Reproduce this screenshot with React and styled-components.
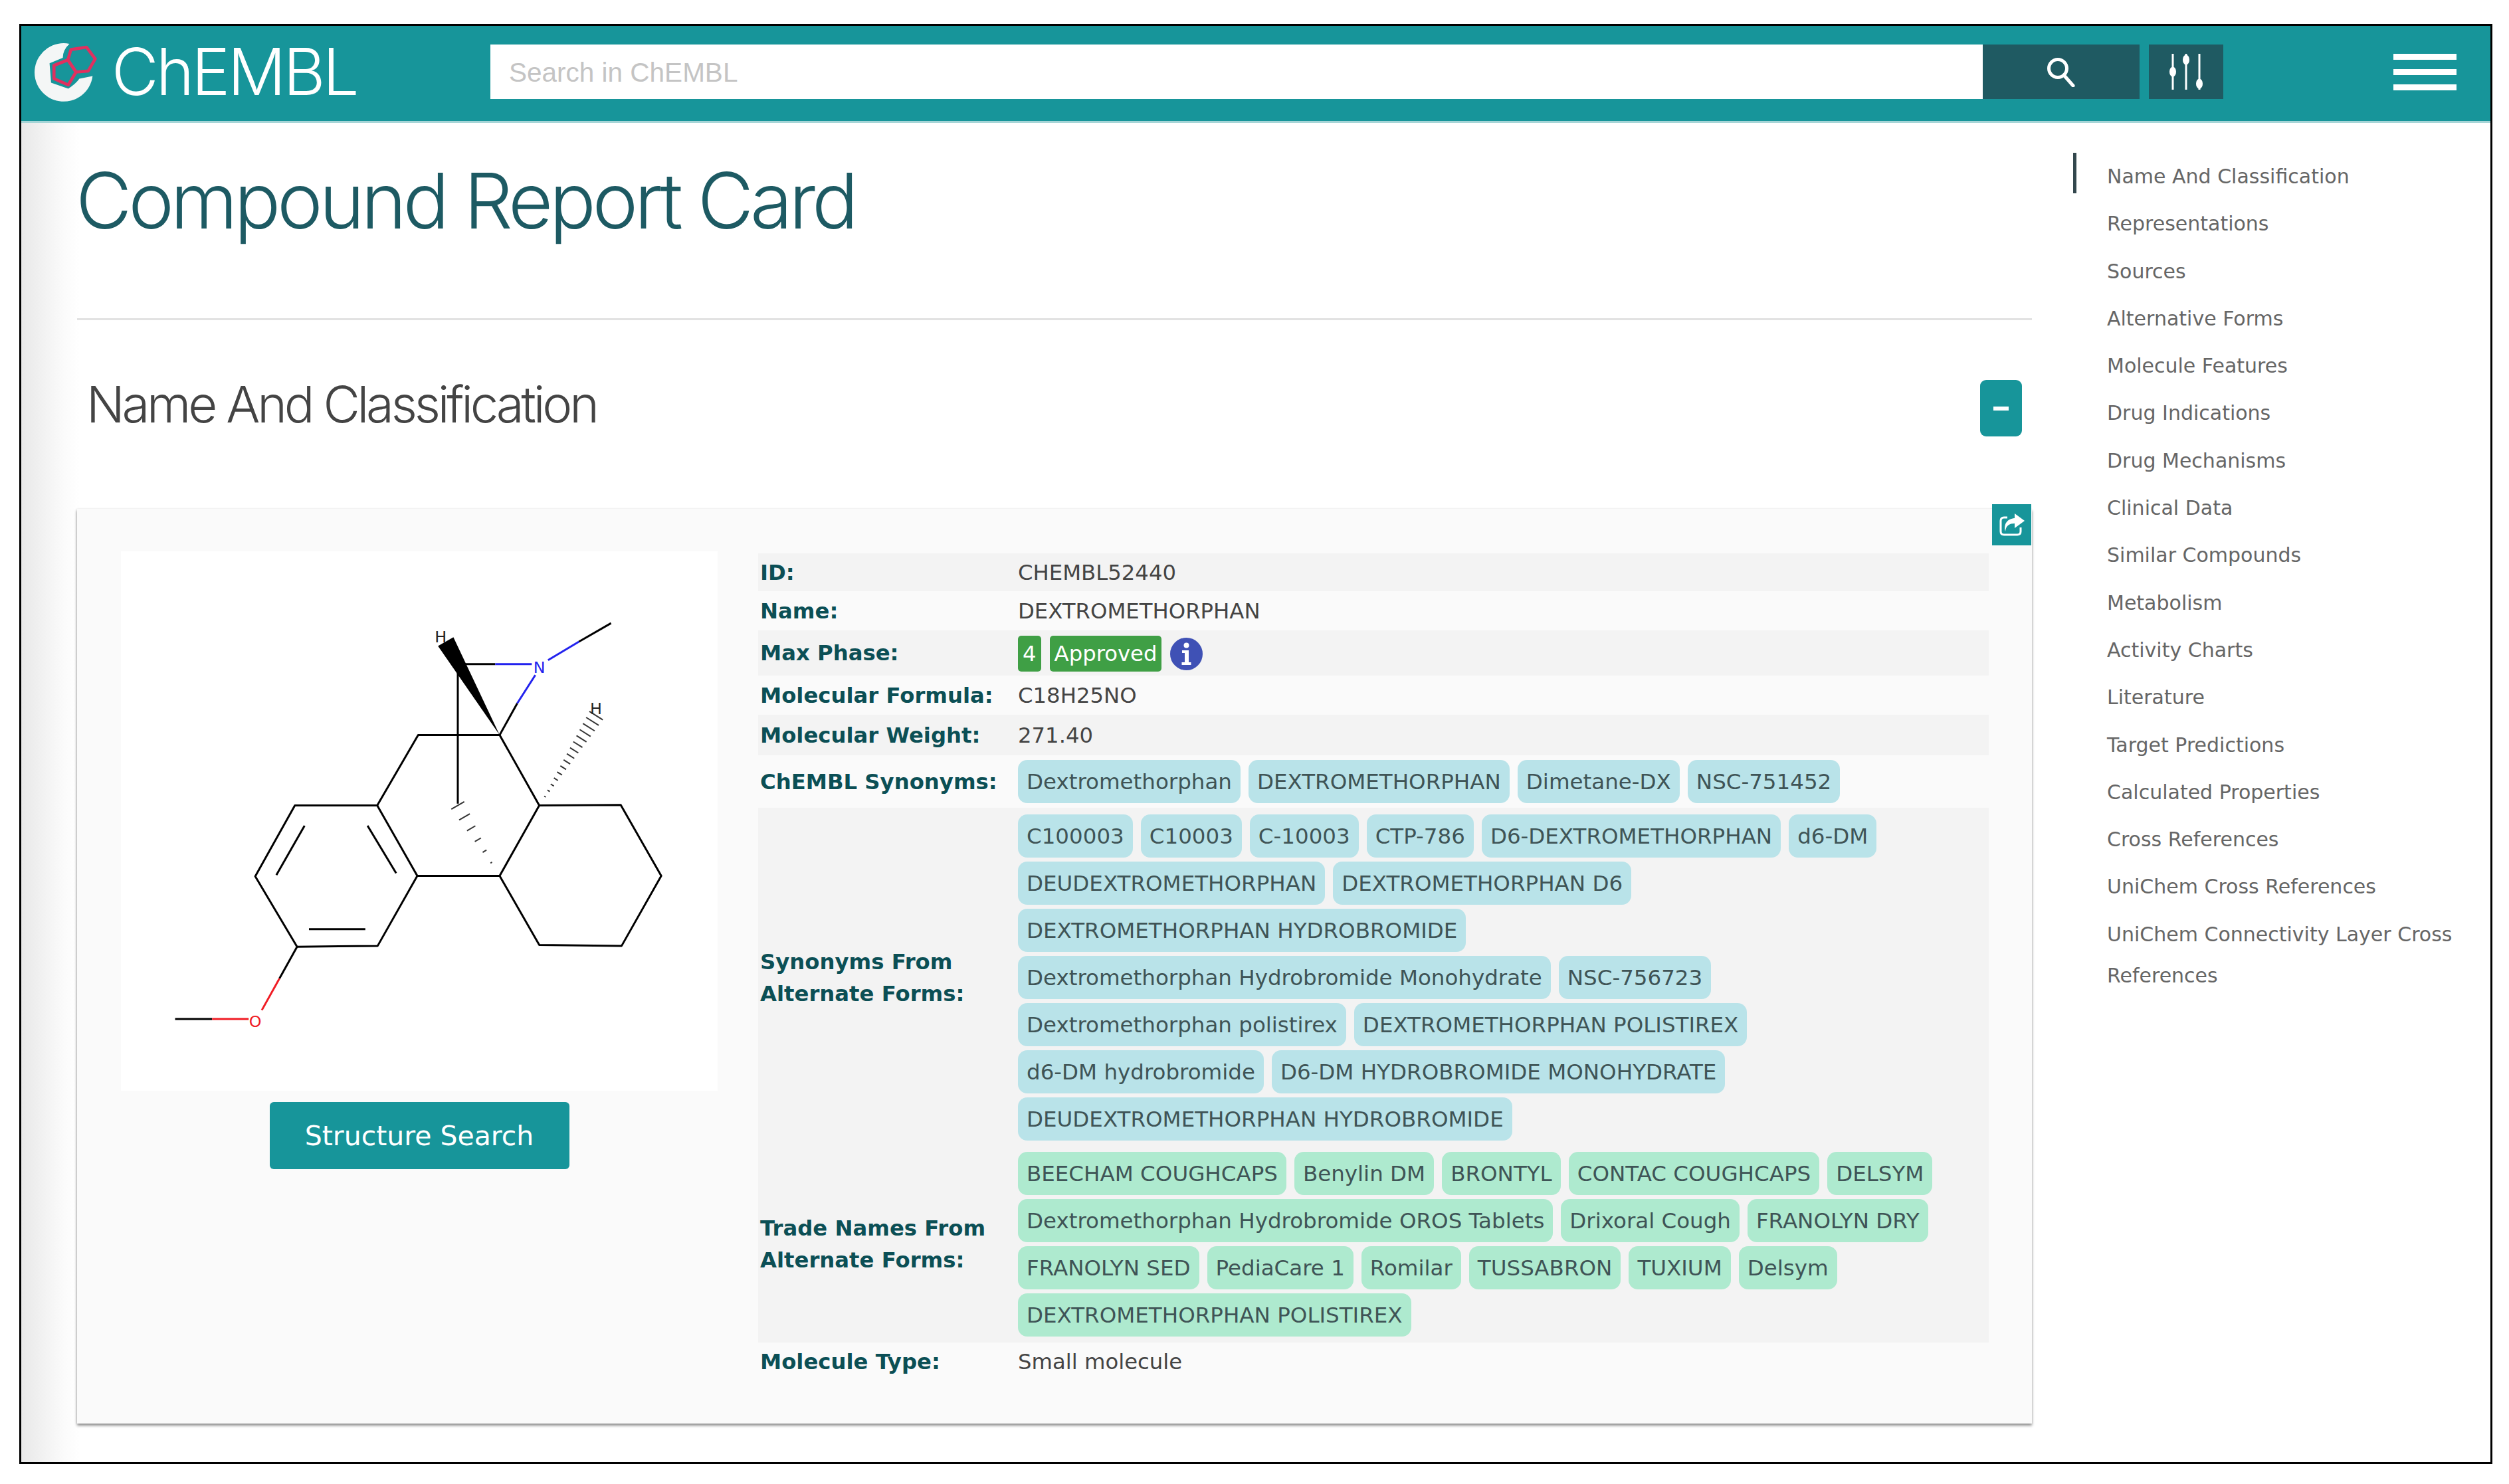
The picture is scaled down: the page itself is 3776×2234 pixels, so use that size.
import React from 'react';
import styled, { createGlobalStyle } from 'styled-components';

const Global = createGlobalStyle`
    html, body {
        margin: 0;
        padding: 0;
        background: #fff;
    }
    * {
        box-sizing: border-box;
    }
`

const NAV = [
    'Name And Classification', 'Representations', 'Sources', 'Alternative Forms', 'Molecule Features',
    'Drug Indications', 'Drug Mechanisms', 'Clinical Data', 'Similar Compounds', 'Metabolism',
    'Activity Charts', 'Literature', 'Target Predictions', 'Calculated Properties', 'Cross References',
    'UniChem Cross References', 'UniChem Connectivity Layer Cross References',
];

const CHEMBL_SYNONYMS = [['Dextromethorphan', 'DEXTROMETHORPHAN', 'Dimetane-DX', 'NSC-751452']];

const ALT_SYNONYMS = [
    ['C100003', 'C10003', 'C-10003', 'CTP-786', 'D6-DEXTROMETHORPHAN', 'd6-DM'],
    ['DEUDEXTROMETHORPHAN', 'DEXTROMETHORPHAN D6'],
    ['DEXTROMETHORPHAN HYDROBROMIDE'],
    ['Dextromethorphan Hydrobromide Monohydrate', 'NSC-756723'],
    ['Dextromethorphan polistirex', 'DEXTROMETHORPHAN POLISTIREX'],
    ['d6-DM hydrobromide', 'D6-DM HYDROBROMIDE MONOHYDRATE'],
    ['DEUDEXTROMETHORPHAN HYDROBROMIDE'],
];

const TRADE_NAMES = [
    ['BEECHAM COUGHCAPS', 'Benylin DM', 'BRONTYL', 'CONTAC COUGHCAPS', 'DELSYM'],
    ['Dextromethorphan Hydrobromide OROS Tablets', 'Drixoral Cough', 'FRANOLYN DRY'],
    ['FRANOLYN SED', 'PediaCare 1', 'Romilar', 'TUSSABRON', 'TUXIUM', 'Delsym'],
    ['DEXTROMETHORPHAN POLISTIREX'],
];

// hashed stereo bond, thin at (x1,y1) and wide at (x2,y2)
function hashLines(x1, y1, x2, y2, count, maxHalf) {
    const len = Math.hypot(x2 - x1, y2 - y1);
    const nx = -(y2 - y1) / len;
    const ny = (x2 - x1) / len;
    return Array.from({ length: count }, (_, i) => {
        const t = i / (count - 1);
        const h = 2 + t * maxHalf;
        const cx = x1 + (x2 - x1) * t;
        const cy = y1 + (y2 - y1) * t;
        return <line key={i} x1={cx - nx * h} y1={cy - ny * h} x2={cx + nx * h} y2={cy + ny * h} />;
    });
}

const Molecule = () => (
    <MoleculeSvg viewBox="125 105 1355 1225">
        <g stroke="#000" strokeWidth="4.5" fill="none" strokeLinejoin="round">
            <polyline points="707,682 800,522 985,522 1075,682" />
            <polygon points="707,682 520,682 430,843 525,1003 708,1001 798,842" />
            <line x1="542" y1="728" x2="478" y2="840" />
            <line x1="685" y1="728" x2="750" y2="836" />
            <line x1="552" y1="963" x2="680" y2="963" />
            <polyline points="798,842 985,842 1075,682 1260,681 1352,842 1262,1001 1075,999 985,842" />
            <line x1="890" y1="362" x2="890" y2="678" />
            <line x1="890" y1="361" x2="975" y2="361" />
            <line x1="985" y1="522" x2="1025" y2="450" />
            <line x1="1165" y1="310" x2="1238" y2="268" />
            <line x1="525" y1="1003" x2="485" y2="1075" />
            <line x1="332" y1="1167" x2="248" y2="1167" />
        </g>
        <g stroke="#2222ee" strokeWidth="4.5" fill="none">
            <line x1="975" y1="361" x2="1058" y2="361" />
            <line x1="1025" y1="450" x2="1066" y2="386" />
            <line x1="1095" y1="352" x2="1165" y2="310" />
        </g>
        <g stroke="#f01c24" strokeWidth="4.5" fill="none">
            <line x1="485" y1="1075" x2="445" y2="1147" />
            <line x1="415" y1="1167" x2="332" y2="1167" />
        </g>
        <polygon points="985,522 845,320 880,300" fill="#000" />
        <g stroke="#333" strokeWidth="3">
            {hashLines(1088, 662, 1204, 478, 15, 16)}
            {hashLines(966, 812, 890, 682, 6, 15)}
        </g>
        <MoleculeLabel x="1075" y="381" fill="#2222ee">N</MoleculeLabel>
        <MoleculeLabel x="430" y="1185" fill="#f01c24">O</MoleculeLabel>
        <MoleculeLabel x="851" y="311" fill="#222">H</MoleculeLabel>
        <MoleculeLabel x="1204" y="474" fill="#222">H</MoleculeLabel>
    </MoleculeSvg>
);

const ChipLines = ({ lines, tone }) => (
    <ChipStack>
        {lines.map((line, i) => (
            <ChipRow key={i}>
                {line.map(text => <Chip key={text} $tone={tone}>{text}</Chip>)}
            </ChipRow>
        ))}
    </ChipStack>
);

const App = () => (
    <Frame>
        <Global />
        <Header>
            <Brand>
                <svg width="98" height="93" viewBox="85 70 295 280">
                    <path d="M255 82 A132 132 0 1 0 360 228 L300 240 Q285 262 250 285 L172 258 L165 170 L225 145 Q225 110 255 82 Z" fill="#f4f6f6" />
                    <g fill="none" stroke="#e0305f" strokeWidth="14" strokeLinejoin="round">
                        <polygon points="262,108 332,97 372,150 340,205 285,210 248,155" />
                        <polygon points="248,155 185,180 185,240 250,268 285,210" />
                    </g>
                </svg>
                <BrandName>ChEMBL</BrandName>
            </Brand>
            <SearchInput placeholder="Search in ChEMBL" />
            <SearchButton>
                <svg width="46" height="46" viewBox="0 0 46 46" fill="none" stroke="#fff" strokeWidth="5">
                    <circle cx="18" cy="18" r="13.5" />
                    <line x1="27" y1="28" x2="41" y2="44" strokeLinecap="round" />
                </svg>
            </SearchButton>
            <FilterButton>
                <svg width="52" height="56" viewBox="0 0 52 56" fill="#fff" stroke="#fff" strokeWidth="3">
                    <line x1="6" y1="1" x2="6" y2="55" />
                    <line x1="26" y1="1" x2="26" y2="55" />
                    <line x1="46" y1="1" x2="46" y2="55" />
                    <ellipse cx="6" cy="28" rx="3.5" ry="6" />
                    <ellipse cx="26" cy="10" rx="3.5" ry="6" />
                    <ellipse cx="46" cy="46" rx="3.5" ry="6" />
                </svg>
            </FilterButton>
            <Burger>
                <BurgerBar />
                <BurgerBar />
                <BurgerBar />
            </Burger>
        </Header>
        <Body>
            <Content>
                <PageTitle>Compound Report Card</PageTitle>
                <SectionHead>
                    <SectionTitle>Name And Classification</SectionTitle>
                    <CollapseButton><CollapseDash /></CollapseButton>
                </SectionHead>
                <Card>
                    <ShareButton>
                        <svg width="39" height="35" viewBox="0 0 39 35">
                            <path d="M13 6H8Q3 6 3 11V27Q3 32 8 32H28Q33 32 33 27V21" fill="none" stroke="#fff" strokeWidth="3" />
                            <path d="M24 0L39 11L24 22V15C16 15 11 18 10 27C7 16 13 8 24 7Z" fill="#fff" />
                        </svg>
                    </ShareButton>
                    <ImageColumn>
                        <ImagePanel><Molecule /></ImagePanel>
                        <StructureButton>Structure Search</StructureButton>
                    </ImageColumn>
                    <Table>
                        <Row $shaded $h={57}><Label>ID:</Label><Value>CHEMBL52440</Value></Row>
                        <Row $h={59}><Label>Name:</Label><Value>DEXTROMETHORPHAN</Value></Row>
                        <Row $shaded $h={68}>
                            <Label>Max Phase:</Label>
                            <Value>
                                <PhaseLine>
                                    <Badge>4</Badge>
                                    <Badge>Approved</Badge>
                                    <svg width="49" height="49" viewBox="0 0 49 49">
                                        <circle cx="24.5" cy="24.5" r="24.5" fill="#3f51b5" />
                                        <circle cx="24.5" cy="11.5" r="4" fill="#fff" />
                                        <path d="M18 19h10v18h3.5v4h-14v-4H22V23h-4z" fill="#fff" />
                                    </svg>
                                </PhaseLine>
                            </Value>
                        </Row>
                        <Row $h={59}><Label>Molecular Formula:</Label><Value>C18H25NO</Value></Row>
                        <Row $shaded $h={61}><Label>Molecular Weight:</Label><Value>271.40</Value></Row>
                        <Row $h={79}><Label>ChEMBL Synonyms:</Label><Value><ChipLines lines={CHEMBL_SYNONYMS} tone="blue" /></Value></Row>
                        <Row $shaded $h={506} $top={5}><Label>Synonyms From<br />Alternate Forms:</Label><Value><ChipLines lines={ALT_SYNONYMS} tone="blue" /></Value></Row>
                        <Row $shaded $h={299} $top={3}><Label>Trade Names From<br />Alternate Forms:</Label><Value><ChipLines lines={TRADE_NAMES} tone="green" /></Value></Row>
                        <Row $h={58}><Label>Molecule Type:</Label><Value>Small molecule</Value></Row>
                    </Table>
                </Card>
            </Content>
            <Sidebar>
                {NAV.map((item, i) => <NavItem key={item} $active={i === 0}>{item}</NavItem>)}
            </Sidebar>
        </Body>
    </Frame>
);

export default App;

//Styled Components
const Frame = styled.div`
    width: 3722px;
    height: 2168px;
    margin: 36px 0 0 29px;
    border: 3px solid #000;
    overflow: hidden;
    background: #fff;
    font-family: "DejaVu Sans", sans-serif;
`

const Header = styled.header`
    display: flex;
    align-items: center;
    height: 146px;
    padding: 0 51px 5px 16px;
    background: #17959a;
    border-bottom: 3px solid #a6d5d7;
`

const Brand = styled.div`
    display: flex;
    align-items: center;
    gap: 22px;
    width: 690px;
    flex: none;
`

const BrandName = styled.span`
    font-family: Inter, "Liberation Sans", sans-serif;
    font-weight: 300;
    font-size: 97px;
    line-height: 100px;
    letter-spacing: -3.6px;
    color: #fff;
`

const SearchInput = styled.input`
    width: 2246px;
    height: 82px;
    padding: 2px 28px 0;
    border: 0;
    outline: 0;
    background: #fff;
    font-family: "Liberation Sans", sans-serif;
    font-size: 40.5px;
    &::placeholder {
        color: #c4c4c4;
    }
`

const SearchButton = styled.div`
    display: flex;
    align-items: center;
    justify-content: center;
    width: 236px;
    height: 82px;
    background: #1f5a62;
`

const FilterButton = styled(SearchButton)`
    width: 112px;
    margin-left: 14px;
`

const Burger = styled.div`
    display: flex;
    flex-direction: column;
    gap: 14px;
    width: 95px;
    margin-left: auto;
`

const BurgerBar = styled.div`
    height: 9px;
    background: #fff;
`

const Body = styled.div`
    display: flex;
    height: calc(100% - 146px);
    padding-left: 84px;
    background: linear-gradient(90deg, #e8e8e8 0, #f4f4f4 40px, #fbfbfb 66px, #fff 88px);
`

const Content = styled.main`
    width: 2942px;
    flex: none;
`

const PageTitle = styled.h1`
    margin: 0;
    padding: 52px 0 112px;
    font-family: Inter, "Liberation Sans", sans-serif;
    font-weight: 300;
    font-size: 116px;
    line-height: 130px;
    letter-spacing: -5.3px;
    text-indent: -2px;
    color: #1d5a63;
    border-bottom: 3px solid #e2e2e2;
`

const SectionHead = styled.div`
    display: flex;
    align-items: center;
    justify-content: space-between;
    height: 85px;
    margin: 90px 0 109px;
    padding: 0 15px 0 14px;
`

const SectionTitle = styled.h2`
    margin: 0;
    padding-bottom: 14px;
    font-family: Inter, "Liberation Sans", sans-serif;
    font-weight: 300;
    font-size: 76px;
    letter-spacing: -4.2px;
    color: #444;
`

const CollapseButton = styled.div`
    display: flex;
    align-items: center;
    justify-content: center;
    width: 63px;
    height: 85px;
    border-radius: 9px;
    background: #17959a;
`

const CollapseDash = styled.div`
    width: 23px;
    height: 6px;
    background: #fff;
`

const Card = styled.section`
    position: relative;
    display: flex;
    gap: 61px;
    padding: 64px 65px 64px 66px;
    background: #fafafa;
    box-shadow: 0 3px 4px rgba(0, 0, 0, 0.45), -1px 0 3px rgba(0, 0, 0, 0.08);
`

const ShareButton = styled.div`
    position: absolute;
    top: -7px;
    right: 1px;
    display: flex;
    align-items: center;
    justify-content: center;
    width: 59px;
    height: 62px;
    background: #17959a;
`

const ImageColumn = styled.div`
    display: flex;
    flex-direction: column;
    align-items: center;
    gap: 17px;
    width: 898px;
    flex: none;
`

const ImagePanel = styled.div`
    width: 898px;
    height: 812px;
    background: #fff;
`

const MoleculeSvg = styled.svg`
    display: block;
    width: 100%;
    height: 100%;
`

const MoleculeLabel = styled.text`
    font-family: "DejaVu Sans", sans-serif;
    font-size: 36px;
    text-anchor: middle;
`

const StructureButton = styled.div`
    display: flex;
    align-items: center;
    justify-content: center;
    width: 451px;
    height: 101px;
    border-radius: 6px;
    background: #17959a;
    color: #fff;
    font-size: 41px;
`

const Table = styled.div`
    flex: 1;
    margin-top: 3px;
`

const Row = styled.div`
    display: grid;
    grid-template-columns: 388px 1fr;
    align-items: center;
    height: ${props => props.$h}px;
    padding: ${props => props.$top || 0}px 0 0 3px;
    background: ${props => props.$shaded ? '#f3f3f3' : 'transparent'};
`

const Label = styled.div`
    font-size: 32.3px;
    line-height: 48px;
    font-weight: bold;
    color: #0b4f55;
`

const Value = styled.div`
    font-size: 32.3px;
    color: #444;
`

const PhaseLine = styled.div`
    display: flex;
    align-items: center;
    gap: 13px;
    padding-top: 2px;
`

const Badge = styled.span`
    display: inline-flex;
    align-items: center;
    justify-content: center;
    height: 54px;
    padding: 0 7px;
    border-radius: 5px;
    background: #3f9f45;
    color: #fff;
`

const ChipStack = styled.div`
    display: flex;
    flex-direction: column;
    gap: 6px;
`

const ChipRow = styled.div`
    display: flex;
    gap: 12px;
`

const Chip = styled.span`
    display: inline-flex;
    align-items: center;
    height: 65px;
    padding: 0 13px;
    border-radius: 14px;
    background: ${props => props.$tone === 'green' ? '#aeeacf' : '#b9e3e9'};
    color: #3f5456;
    font-size: 32.5px;
    white-space: nowrap;
`

const Sidebar = styled.nav`
    display: flex;
    flex-direction: column;
    gap: 4.3px;
    width: 580px;
    margin-left: 62px;
    padding-top: 45px;
`

const NavItem = styled.div`
    position: relative;
    padding: 5px 0 0 51px;
    font-size: 30px;
    line-height: 62px;
    color: #666;
    &::before {
        content: '';
        position: absolute;
        left: 0;
        top: 0;
        width: 5px;
        height: 61px;
        background: ${props => props.$active ? '#33474d' : 'transparent'};
    }
`
